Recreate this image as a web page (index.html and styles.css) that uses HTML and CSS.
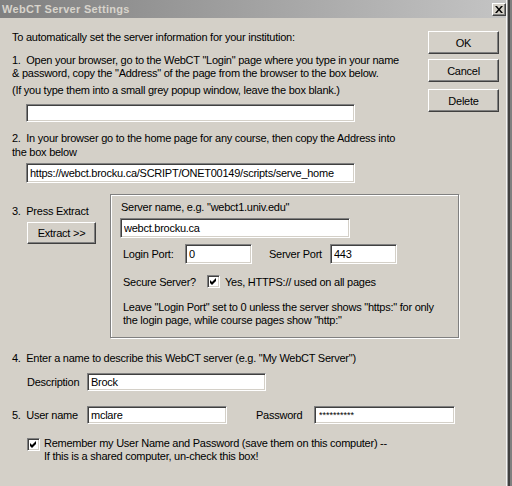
FILE: index.html
```html
<!DOCTYPE html>
<html lang="en">
<head>
    <meta charset="UTF-8">
    <title>WebCT Server Settings</title>
    <link rel="stylesheet" href="styles.css">
</head>
<body>

<div class="window">
    <div class="titlebar">
        <span class="title">WebCT Server Settings</span>
        <button class="close" aria-label="Close">
            <svg width="8" height="7" viewBox="0 0 8 7"><path d="M0 0h2l2 2.4L6 0h2L5 3.5 8 7H6L4 4.6 2 7H0l3-3.5z" fill="#000"/></svg>
        </button>
    </div>

    <div class="content">
        <div class="top">
            <div class="steps">
                <p class="intro">To automatically set the server information for your institution:</p>
                <p class="step1">1.&nbsp; Open your browser, go to the WebCT "Login" page where you type in your name<br>&amp; password, copy the "Address" of the page from the browser to the box below.</p>
                <p class="note">(If you type them into a small grey popup window, leave the box blank.)</p>
                <input class="field url" type="text" value="">
                <p class="step2">2.&nbsp; In your browser go to the home page for any course, then copy the Address into<br>the box below</p>
                <input class="field url home" type="text" value="https://webct.brocku.ca/SCRIPT/ONET00149/scripts/serve_home">
            </div>
            <div class="actions">
                <button class="btn">OK</button>
                <button class="btn">Cancel</button>
                <button class="btn btn-delete">Delete</button>
            </div>
        </div>

        <div class="extract">
            <div class="extract-side">
                <p class="press">3.&nbsp; Press Extract</p>
                <button class="btn btn-extract">Extract &gt;&gt;</button>
            </div>
            <div class="group">
                <p class="server-hint">Server name, e.g. "webct1.univ.edu"</p>
                <input class="field server" type="text" value="webct.brocku.ca">
                <div class="ports">
                    <span class="port-label">Login Port:</span>
                    <input class="field port" type="text" value="0">
                    <span class="port-label server-port">Server Port</span>
                    <input class="field port" type="text" value="443">
                </div>
                <div class="secure">
                    <span class="secure-label">Secure Server?</span>
                    <span class="checkbox"><svg width="9" height="9" viewBox="0 0 9 9"><polygon points="1,3 3,5 7,1 7,4 3,8 1,6" fill="#000"/></svg></span>
                    <span class="secure-text">Yes, HTTPS:// used on all pages</span>
                </div>
                <p class="leave">Leave "Login Port" set to 0 unless the server shows "https:" for only<br>the login page, while course pages show "http:"</p>
            </div>
        </div>

        <p class="step4">4.&nbsp; Enter a name to describe this WebCT server (e.g. "My WebCT Server")</p>
        <div class="row desc-row">
            <span class="row-label">Description</span>
            <input class="field desc" type="text" value="Brock">
        </div>
        <div class="row user-row">
            <span class="row-label user-label">5.&nbsp; User name</span>
            <input class="field user" type="text" value="mclare">
            <span class="row-label pass-label">Password</span>
            <input class="field pass" type="text" value="**********">
        </div>
        <div class="remember">
            <span class="checkbox"><svg width="9" height="9" viewBox="0 0 9 9"><polygon points="1,3 3,5 7,1 7,4 3,8 1,6" fill="#000"/></svg></span>
            <p class="remember-text">Remember my User Name and Password (save them on this computer) --<br>If this is a shared computer, un-check this box!</p>
        </div>
    </div>
</div>

</body>
</html>
```

FILE: styles.css
```css
* {
    box-sizing: border-box;
}
body {
    margin: 0;
    background-color: #d4d0c8;
    font-family: "Liberation Sans", Arial, sans-serif;
    font-size: 11px;
    letter-spacing: -0.25px;
    color: #000;
}
p {
    margin: 0;
}
.window {
    width: 512px;
    height: 486px;
    background: #d4d0c8;
    overflow: hidden;
    box-shadow: inset -2px 0 #808080, inset -4px 0 #404040, inset -5px 0 #a0a0a0, inset -6px 0 #f4f4f4;
}
.titlebar {
    height: 18px;
    margin-right: 6px;
    display: flex;
    align-items: center;
    justify-content: space-between;
    padding: 0 0 0 2px;
    background: linear-gradient(to right, #808080, #c4c4c4);
}
.title {
    color: #d8d4cc;
    font-weight: bold;
    letter-spacing: 0.3px;
}
.close {
    width: 14px;
    height: 13px;
    padding: 0;
    margin-right: 0;
    display: flex;
    align-items: center;
    justify-content: center;
    background: #d4d0c8;
    border: 1px solid;
    border-color: #fff #404040 #404040 #fff;
    box-shadow: inset -1px -1px #808080;
}

/* sunken edit box */
.field {
    display: block;
    height: 20px;
    padding: 0 3px;
    margin: 0;
    font-family: inherit;
    font-size: 11px;
    letter-spacing: -0.25px;
    color: #000;
    background: #fff;
    border: 1px solid;
    border-color: #808080 #fff #fff #808080;
    box-shadow: inset 1px 1px #404040, inset -1px -1px #d4d0c8;
    outline: none;
}

/* raised push button */
.btn {
    display: block;
    width: 71px;
    height: 23px;
    padding: 0;
    font-family: inherit;
    font-size: 11px;
    letter-spacing: -0.25px;
    color: #000;
    background: #d4d0c8;
    border: 1px solid;
    border-color: #fff #404040 #404040 #fff;
    box-shadow: inset -1px -1px #808080;
}

.checkbox {
    width: 13px;
    height: 13px;
    flex: none;
    display: flex;
    align-items: center;
    justify-content: center;
    background: #fff;
    border: 1px solid;
    border-color: #808080 #fff #fff #808080;
    box-shadow: inset 1px 1px #404040, inset -1px -1px #d4d0c8;
}

.content {
    padding-left: 12px;
}
.top {
    display: flex;
    padding-top: 12px;
}
.steps {
    line-height: 13px;
}
.intro {
    line-height: 14px;
}
.step1 {
    margin-top: 10px;
}
.note {
    margin-top: 4px;
}
.field.url {
    width: 329px;
    margin-left: 14px;
    height: 18px;
    margin-top: 7px;
}
.field.home {
    height: 20px;
    margin-top: 4px;
}
.step2 {
    margin-top: 9px;
    line-height: 14px;
}
.actions {
    margin-left: auto;
    margin-right: 13px;
    margin-top: 1px;
    display: flex;
    flex-direction: column;
    gap: 5px;
}
.btn-delete {
    margin-top: 2px;
}

.extract {
    display: flex;
    margin-top: 11px;
}
.extract-side {
    width: 98px;
}
.press {
    margin-top: 10px;
    line-height: 14px;
}
.btn-extract {
    width: 69px;
    height: 22px;
    margin: 4px 0 0 15px;
}
.group {
    width: 349px;
    padding: 5px 10px 10px 10px;
    border: 1px solid #808080;
    box-shadow: inset 1px 1px #fff, 1px 1px #fff;
}
.server-hint {
    line-height: 14px;
}
.field.server {
    width: 230px;
    margin: 4px 0 0 -1px;
}
.ports {
    display: flex;
    align-items: center;
    margin-top: 6px;
}
.port-label {
    width: 62px;
    margin-left: 2px;
}
.port-label.server-port {
    width: 61px;
    margin-left: 17px;
}
.field.port {
    width: 67px;
    height: 20px;
}
.secure {
    display: flex;
    align-items: center;
    margin-top: 11px;
    height: 13px;
}
.secure-label {
    width: 84px;
    margin-left: 2px;
}
.secure-text {
    margin-left: 5px;
}
.leave {
    margin: 13px 0 0 2px;
    line-height: 13px;
}

.step4 {
    margin-top: 13px;
    line-height: 14px;
}
.row {
    display: flex;
    align-items: center;
}
.row-label {
    width: 60px;
}
.desc-row {
    margin-top: 8px;
    padding-left: 15px;
}
.field.desc {
    width: 179px;
    height: 18px;
}
.user-row {
    margin-top: 15px;
}
.row-label.user-label {
    width: 75px;
}
.field.user {
    width: 140px;
    height: 18px;
}
.row-label.pass-label {
    width: 58px;
    margin-left: 29px;
}
.field.pass {
    width: 141px;
    height: 18px;
    font-size: 9px;
    letter-spacing: 0;
    padding-left: 4px;
}
.remember {
    display: flex;
    align-items: flex-start;
    margin-top: 14px;
    padding-left: 15px;
}
.remember-text {
    margin-left: 4px;
    line-height: 13px;
    margin-top: -1px;
}
```
